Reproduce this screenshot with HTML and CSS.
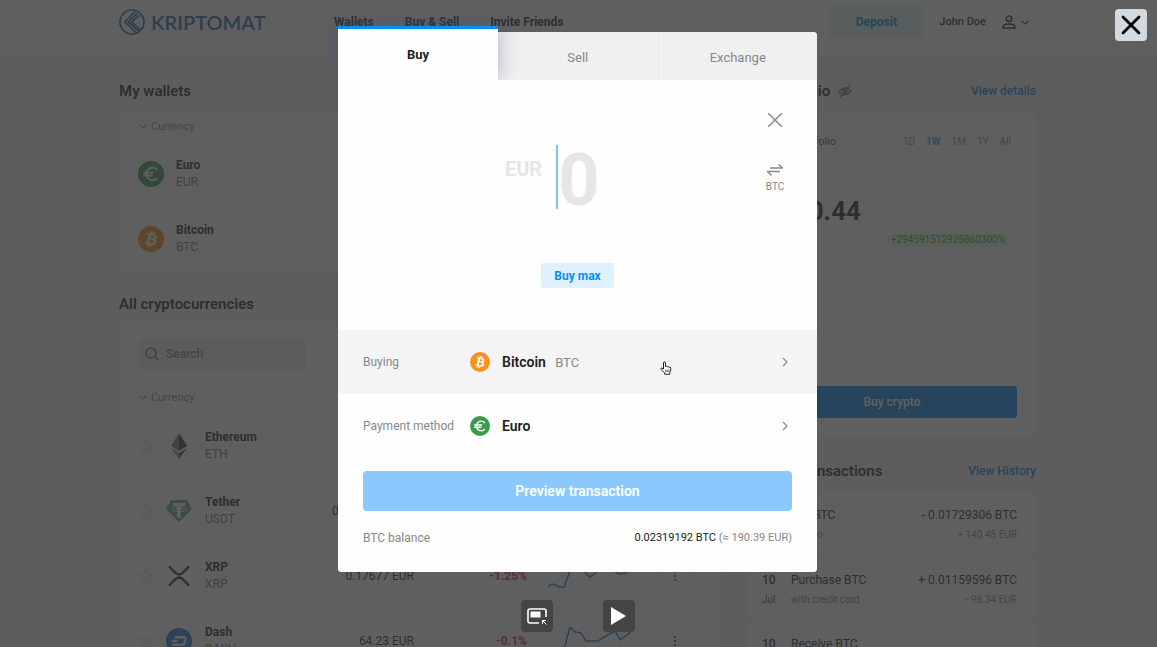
FILE: index.html
```html
<!DOCTYPE html>
<html lang="en">
<head>
<meta charset="UTF-8">
<meta name="viewport" content="width=device-width, initial-scale=1">
<title>Kriptomat</title>
<link rel="stylesheet" href="styles.css">
</head>
<body>

<!-- shared icons -->
<svg class="sprite" aria-hidden="true">
  <symbol id="btc" viewBox="0 0 32 32">
    <circle cx="16" cy="16" r="16" fill="#f7931a"/>
    <path fill="#fff" d="M23.2 14c.3-2.1-1.3-3.2-3.5-4l.7-2.9-1.7-.4-.7 2.8-1.4-.3.7-2.8-1.7-.4-.7 2.9-3.5-.9-.5 1.900s1.300.3 1.200.3c.7.2.8.6.8 1l-2 8c-.1.200-.3.500-.8.400l-1.200-.3-.9 2 3.400.8-.7 2.900 1.700.4.700-2.900 1.400.4-.7 2.800 1.700.5.700-2.900c3 .6 5.200.3 6.100-2.400.7-2.100 0-3.400-1.600-4.200 1.100-.3 2-1 2.200-2.500zm-3.900 5.500c-.5 2.100-4.100 1-5.300.7l.9-3.800c1.200.3 5 .9 4.400 3.100zm.5-5.500c-.5 2-3.500 1-4.400.7l.9-3.400c1 .2 4.100.7 3.500 2.700z"/>
  </symbol>
  <symbol id="eur" viewBox="0 0 32 32">
    <circle cx="16" cy="16" r="16" fill="#3a9b48"/>
    <path fill="none" stroke="#fff" stroke-width="2.4" stroke-linecap="round" d="M23 10.5a7.6 7.6 0 1 0 0 11M7.5 14.5h11M7.5 18h10"/>
  </symbol>
  <symbol id="star" viewBox="0 0 24 24">
    <path fill="none" stroke="#ddd" stroke-width="1.5" d="M12 2.5l2.8 6.6 7.2.6-5.5 4.7 1.7 7-6.2-3.7-6.2 3.7 1.7-7L2 9.7l7.2-.6z"/>
  </symbol>
  <symbol id="down" viewBox="0 0 10 10">
    <path fill="none" stroke="currentColor" stroke-width="1.3" d="M1 3.5l4 4 4-4"/>
  </symbol>
  <symbol id="next" viewBox="0 0 10 10">
    <path fill="none" stroke="currentColor" stroke-width="1.2" d="M3 1l4 4-4 4"/>
  </symbol>
</svg>

<header class="topbar">
  <a class="logo" href="#">
    <svg viewBox="0 0 26 26" width="26" height="26" fill="none" stroke="currentColor" stroke-width="1.7">
      <path d="M21.5 4.500A12 12 0 1 0 21.5 21.500"/>
      <path d="M21.8 4.8a12 12 0 0 1 0 16.4"/>
      <path d="M16 2.5L6 13l11.5 11M18.5 4L9.5 13l10.5 9.5M20.5 5.8L13 13l8.5 8"/>
    </svg>
    <span>KRIPTOMAT</span>
  </a>
  <nav class="nav">
    <a href="#">Wallets</a>
    <a href="#">Buy &amp; Sell</a>
    <a href="#">Invite Friends</a>
  </nav>
  <button class="deposit" type="button">Deposit</button>
  <button class="user" type="button">
    <span>John Doe</span>
    <svg class="user-icon" viewBox="0 0 14 14" width="14" height="14" fill="none" stroke="currentColor" stroke-width="1.4">
      <circle cx="7" cy="3.7" r="2.8"/>
      <path d="M1 13v-1c0-2 2.500-3 6-3s6 1 6 3v1z"/>
    </svg>
    <svg width="8" height="8"><use href="#down"/></svg>
  </button>
</header>

<main class="page">
  <section class="left">
    <h2>My wallets</h2>
    <div class="card">
      <table class="coins">
        <thead><tr><th><svg width="8" height="8"><use href="#down"/></svg>Currency</th></tr></thead>
        <tbody>
          <tr><td><div class="coin">
            <svg width="26" height="26"><use href="#eur"/></svg>
            <p><b>Euro</b><span>EUR</span></p>
          </div></td></tr>
          <tr><td><div class="coin">
            <svg width="26" height="26"><use href="#btc"/></svg>
            <p><b>Bitcoin</b><span>BTC</span></p>
          </div></td></tr>
        </tbody>
      </table>
    </div>

    <h2>All cryptocurrencies</h2>
    <div class="card">
      <div class="searchbar">
        <label class="search">
          <svg viewBox="0 0 14 14" width="14" height="14" fill="none" stroke="currentColor" stroke-width="1.5">
            <circle cx="6" cy="6" r="5"/><path d="M9.5 9.5l4 4"/>
          </svg>
          <input type="search" placeholder="Search" aria-label="Search">
        </label>
      </div>
      <table class="coins market">
        <thead><tr><th colspan="5"><svg width="8" height="8"><use href="#down"/></svg>Currency</th></tr></thead>
        <tbody>
          <tr>
            <td><div class="coin">
              <svg width="16" height="16"><use href="#star"/></svg>
              <svg width="26" height="26" viewBox="0 0 26 26">
                <path fill="#343434" d="M13 0l8 13-8 5z"/><path fill="#777" d="M13 0L5 13l8 5z"/>
                <path fill="#555" d="M13 20l8-5-8 11z"/><path fill="#999" d="M13 20l-8-5 8 11z"/>
              </svg>
              <p><b>Ethereum</b><span>ETH</span></p>
            </div></td>
            <td class="price"></td><td class="change"></td><td class="chart"></td><td class="more"></td>
          </tr>
          <tr>
            <td><div class="coin">
              <svg width="16" height="16"><use href="#star"/></svg>
              <svg width="26" height="26" viewBox="0 0 26 26">
                <path fill="#50af95" d="M5 2h16l5 9-13 13L0 11z"/>
                <path fill="#fff" d="M7 5h12v3.5h-4V20h-4V8.5H7z"/>
                <ellipse cx="13" cy="11.8" rx="8" ry="1.8" fill="none" stroke="#fff" stroke-width=".8"/>
              </svg>
              <p><b>Tether</b><span>USDT</span></p>
            </div></td>
            <td class="price">0.8801921 EUR</td><td class="change"></td><td class="chart"></td><td class="more"></td>
          </tr>
          <tr>
            <td><div class="coin">
              <svg width="16" height="16"><use href="#star"/></svg>
              <svg width="26" height="26" viewBox="0 0 26 26" fill="none" stroke="#222" stroke-width="2.2">
                <path d="M3 3.5l6.5 6.5q3.5 3 7 0L23 3.5M3 22.5L9.5 16q3.5-3 7 0l6.5 6.5"/>
              </svg>
              <p><b>XRP</b><span>XRP</span></p>
            </div></td>
            <td class="price">0.17677 EUR</td>
            <td class="change">-1.25%</td>
            <td class="chart"><svg viewBox="0 0 84 28" width="84" height="28"><path d="M1 24l5-2 6 3h5l6-16 6-5 6 4 8 7 8-6 8-5 8 5 5 3 8-1"/></svg></td>
            <td class="more"><button type="button" aria-label="More"><i></i><i></i><i></i></button></td>
          </tr>
          <tr>
            <td><div class="coin">
              <svg width="16" height="16"><use href="#star"/></svg>
              <svg width="26" height="26" viewBox="0 0 26 26">
                <circle cx="13" cy="13" r="13" fill="#1c75d8"/>
                <path fill="none" stroke="#fff" stroke-width="2.4" d="M8.5 9.2H18q2 0 1.5 2l-.8 3.2q-.7 2.4-3 2.4H6M5.5 13h6"/>
              </svg>
              <p><b>Dash</b><span>DASH</span></p>
            </div></td>
            <td class="price">64.23 EUR</td>
            <td class="change">-0.1%</td>
            <td class="chart"><svg viewBox="0 0 84 28" width="84" height="28"><path d="M5 24l6-2h6l6-22 5 5 6 1 5 8h12l8-5 9-5 5 9 11-8"/></svg></td>
            <td class="more"><button type="button" aria-label="More"><i></i><i></i><i></i></button></td>
          </tr>
        </tbody>
      </table>
    </div>
  </section>

  <aside class="right">
    <div class="heading">
      <h2>My portfolio</h2>
      <svg viewBox="0 0 14 14" width="14" height="14" fill="none" stroke="#777" stroke-width="1.4">
        <path d="M1 8q6-8 12-1-6 7-12 1zM2 13L12 1"/><circle cx="7" cy="7" r="2" fill="#777"/>
      </svg>
      <a href="#">View details</a>
    </div>
    <div class="card portfolio">
      <div class="range">
        <span>Total portfolio</span>
        <button type="button">1D</button>
        <button type="button" class="on">1W</button>
        <button type="button">1M</button>
        <button type="button">1Y</button>
        <button type="button">All</button>
      </div>
      <p class="total">€ 190.44</p>
      <p class="gain"><span>+294591512925860300%</span></p>
      <button class="buy-crypto" type="button">Buy crypto</button>
    </div>

    <div class="heading">
      <h2>Recent transactions</h2>
      <a href="#">View History</a>
    </div>
    <ul class="card history">
      <li>
        <p class="date"><b>10</b><span>Jul</span></p>
        <p class="what"><b>Sell BTC</b><span>to Euro</span></p>
        <p class="amount"><b>- 0.01729306 BTC</b><span>+ 140.48 EUR</span></p>
      </li>
      <li>
        <p class="date"><b>10</b><span>Jul</span></p>
        <p class="what"><b>Purchase BTC</b><span>with credit card</span></p>
        <p class="amount"><b>+ 0.01159596 BTC</b><span>- 96.34 EUR</span></p>
      </li>
      <li>
        <p class="date"><b>10</b><span>Jul</span></p>
        <p class="what"><b>Receive BTC</b><span>from wallet</span></p>
        <p class="amount"><b>+ 0.00279577 BTC</b></p>
      </li>
    </ul>
  </aside>
</main>

<div class="overlay">
  <div class="modal" role="dialog" aria-label="Buy">
    <div class="tabs" role="tablist">
      <button type="button" role="tab" class="active" aria-selected="true">Buy</button>
      <button type="button" role="tab">Sell</button>
      <button type="button" role="tab">Exchange</button>
    </div>
    <form class="modal-body">
      <div class="amount-area">
        <button class="close" type="button" aria-label="Close">
          <svg viewBox="0 0 14 14" width="14" height="14" fill="none" stroke="currentColor" stroke-width="1.5"><path d="M0 0l14 14M14 0L0 14"/></svg>
        </button>
        <div class="amount-field">
          <label for="amount">EUR</label>
          <input id="amount" type="text" placeholder="0">
        </div>
        <button class="swap" type="button">
          <svg viewBox="0 0 16 12" width="16" height="12" fill="none" stroke="currentColor" stroke-width="1.4"><path d="M3 4h12.500L11.500.5M13 7.500H.5l4 4"/></svg>
          <span>BTC</span>
        </button>
        <button class="buy-max" type="button">Buy max</button>
      </div>
      <button class="pick hover" type="button">
        <span>Buying</span>
        <svg width="20" height="20"><use href="#btc"/></svg>
        <span class="picked"><b>Bitcoin</b> BTC</span>
        <svg width="10" height="10"><use href="#next"/></svg>
      </button>
      <button class="pick" type="button">
        <span>Payment method</span>
        <svg width="20" height="20"><use href="#eur"/></svg>
        <span class="picked"><b>Euro</b></span>
        <svg width="10" height="10"><use href="#next"/></svg>
      </button>
      <button class="preview" type="submit">Preview transaction</button>
      <div class="balance">
        <span>BTC balance</span>
        <span class="value"><b>0.02319192 BTC</b> (≈ 190.39 EUR)</span>
      </div>
    </form>
    <svg class="pointer" viewBox="0 0 12 14" width="12" height="14">
      <path fill="#fff" stroke="#222" d="M3.500 8V2q0-1.200 1-1.200t1 1.200v3.500q1.200-.8 1.700.3 1.200-.6 1.700.4 1.800-.4 1.900 1.200 0 2.600-1 4v1.800H4.700V12L1 8.300q-.4-1.500.8-1.300z"/>
      <path stroke="#222" stroke-width=".7" d="M5.700 8.500v2.500M7.300 8.500v2.500M8.900 8.500v2.500"/>
    </svg>
  </div>
</div>

<button class="viewer-close" type="button" aria-label="Close viewer">
  <svg viewBox="0 0 20 20" width="20" height="20" fill="none" stroke="#000" stroke-width="2.8" stroke-linecap="round"><path d="M2 2l16 16M18 2L2 18"/></svg>
</button>
<div class="player">
  <button type="button" aria-label="Picture in picture">
    <svg viewBox="0 0 20 18" width="20" height="18" fill="none" stroke="#fff">
      <path stroke-width="1.6" d="M12 16H3q-2 0-2-2V4q0-2 2-2h14q2 0 2 2v6"/>
      <path fill="#fff" stroke="none" d="M3.500 4.500h10v6h-10z"/>
      <path d="M19.500 17.500l-4-4M15.500 17v-3.500H19"/>
    </svg>
  </button>
  <button type="button" aria-label="Play">
    <svg viewBox="0 0 16 18" width="16" height="18"><path fill="#fff" d="M0 0l15 9-15 9z"/></svg>
  </button>
</div>

</body>
</html>
```

FILE: styles.css
```css
* {
  box-sizing: border-box;
}

body {
  margin: 0;
  height: 100vh;
  overflow: hidden;
  background: #f6f6f6;
  color: #222;
  font-family: Roboto, "Liberation Sans", sans-serif;
  font-size: 12px;
  line-height: 16px;
}

button, input {
  font: inherit;
  color: inherit;
  border: 0;
  padding: 0;
  background: none;
}

a {
  color: inherit;
  text-decoration: none;
}

h2, p, ul {
  margin: 0;
  padding: 0;
}

svg {
  flex: none;
}

.sprite {
  position: absolute;
  width: 0;
  height: 0;
}

/* header */
.topbar {
  display: flex;
  align-items: center;
  height: 58px;
  padding: 0 121px 14px 119px;
  background: #fff;
  border-bottom: 1px solid #f2f2f2;
  font-weight: 500;
}

.logo {
  display: flex;
  align-items: center;
  gap: 6px;
  width: 215px;
  color: #1468b0;
  font-family: Lato, sans-serif;
  font-size: 20px;
  font-weight: 600;
}

.nav {
  display: flex;
  gap: 31px;
  font-weight: 700;
}

.deposit {
  width: 94px;
  height: 32px;
  margin-left: auto;
  border-radius: 4px;
  background: #def4fb;
  color: #0086f5;
  font-weight: 700;
}

.user {
  display: flex;
  align-items: center;
  gap: 5px;
  margin: 0 7px 0 16px;
  font-size: 11px;
  font-weight: 500;
}

.user-icon {
  margin-left: 11px;
}

/* page */
.page {
  display: grid;
  grid-template-columns: minmax(0, 603fr) minmax(0, 288fr);
  gap: 26px;
  padding: 22px 121px 0 119px;
}

h2 {
  font-size: 15px;
  line-height: 22px;
  font-weight: 600;
}

.left h2, .heading {
  margin-bottom: 11px;
}

.card {
  margin-bottom: 22px;
  border-radius: 4px;
  background: #fff;
  box-shadow: 0 1px 4px #eee;
}

.coins {
  width: 100%;
  border-collapse: collapse;
}

.coins th {
  height: 28px;
  padding: 0 20px;
  border-bottom: 1px solid #f2f2f2;
  color: #888;
  font-size: 11px;
  font-weight: 400;
  text-align: left;
}

.coins th svg {
  margin-right: 4px;
}

.coins td {
  height: 65px;
  padding: 0;
}

.coins tr + tr td {
  border-top: 1px solid #f2f2f2;
}

.coin {
  display: flex;
  align-items: center;
  gap: 12px;
  padding-left: 19px;
}

.coin b, .coin span {
  display: block;
  line-height: 17px;
}

b {
  font-weight: 500;
}

.coin b {
  font-weight: 700;
}

.coin span {
  color: #777;
}

.searchbar {
  padding: 12px 19px;
  border-bottom: 1px solid #f2f2f2;
}

.search {
  display: flex;
  align-items: center;
  gap: 7px;
  width: 168px;
  height: 32px;
  padding: 0 7px;
  border-radius: 4px;
  background: #f0f0f0;
  color: #777;
}

.search input {
  width: 100%;
  outline: 0;
  font-weight: 500;
}

.search input::placeholder {
  color: #888;
}

.market th {
  height: 30px;
}

.market .price {
  width: 120px;
  text-align: right;
}

.market .change {
  width: 113px;
  color: #e02030;
  font-weight: 700;
  text-align: right;
}

.market .chart {
  width: 105px;
  padding-left: 20px;
}

.market .coin {
  gap: 13px;
}

.market .coin svg:first-child {
  margin-right: -1px;
}

.chart svg {
  display: block;
  fill: none;
  stroke: #0086f5;
  stroke-width: 1.5;
}

.market .more {
  width: 90px;
}

.more button {
  display: flex;
  flex-direction: column;
  align-items: center;
  justify-content: center;
  gap: 2px;
  width: 26px;
  height: 26px;
  margin-left: 30px;
  border-radius: 50%;
  box-shadow: 0 0 3px #eee;
}

.more i {
  width: 2px;
  height: 2px;
  background: #0086f5;
}

/* portfolio */
.heading {
  display: flex;
  align-items: center;
  gap: 8px;
}

.heading a {
  margin-left: auto;
  color: #0086f5;
  font-weight: 500;
}

.portfolio {
  padding: 21px 19px 20px;
}

.range {
  display: flex;
  gap: 11px;
  padding-right: 6px;
  color: #888;
  font-size: 10px;
}

.range span {
  margin-right: auto;
  color: #555;
  font-size: 11px;
}

.range .on {
  color: #0086f5;
  font-weight: 500;
}

.total {
  display: flex;
  justify-content: flex-end;
  width: 94px;
  margin-top: 45px;
  font-size: 26px;
  line-height: 32px;
  font-weight: 700;
  white-space: nowrap;
}

.gain {
  margin-top: 6px;
  padding-right: 8px;
  color: #22b822;
  font-size: 10px;
  line-height: 14px;
  text-align: right;
}

.gain span {
  display: inline-block;
  padding: 0 4px;
  border-radius: 7px;
  background: #e8f8e8;
}

.buy-crypto {
  display: block;
  width: 100%;
  height: 32px;
  margin-top: 139px;
  border-radius: 3px;
  background: #0086f5;
  color: #fff;
  font-weight: 500;
}

.history {
  list-style: none;
}

.history li {
  display: flex;
  align-items: center;
  height: 64px;
  padding: 0 19px 0 12px;
}

.history li + li {
  border-top: 1px solid #f2f2f2;
}

.history b, .history span {
  display: block;
  font-weight: 400;
  line-height: 19px;
}

.history span {
  color: #888;
  font-size: 10px;
}

.history .date {
  width: 31px;
  padding-left: 2px;
}

.history .date b {
  font-weight: 500;
}

.history .date span {
  color: #444;
}

.amount {
  margin-left: auto;
  text-align: right;
}

/* buy dialog */
.overlay {
  position: fixed;
  inset: 0;
  display: flex;
  align-items: flex-start;
  justify-content: center;
  padding: 32px 2px 0 0;
  background: rgba(50, 50, 50, 0.78);
}

.modal {
  position: relative;
  width: 479px;
  border-radius: 4px;
  background: #fefefe;
  color: #888;
}

.tabs {
  display: grid;
  grid-template-columns: 160px 1fr 1fr;
  height: 48px;
  border-radius: 4px 4px 0 0;
  background: #f0f0f0;
}

.tabs button {
  height: 48px;
  padding-top: 4px;
  font-size: 13px;
}

.tabs button + button + button {
  border-left: 1px solid #eaeaea;
}

.tabs .active {
  height: 54px;
  margin-top: -6px;
  padding-top: 0;
  border-top: 3px solid #0090f8;
  background: #fefefe;
  box-shadow: 0 0 20px rgba(70, 80, 130, 0.4);
  color: #222;
  font-weight: 700;
}

.modal-body {
  position: relative;
  padding-bottom: 24px;
  border-radius: 0 0 4px 4px;
  background: #fefefe;
}

.amount-area {
  display: grid;
  grid-template-columns: 1fr auto 1fr;
  align-items: center;
  padding: 32px 26px 42px;
}

.close {
  grid-column: 3;
  justify-self: end;
  width: 32px;
  height: 16px;
}

.close svg, .swap svg {
  display: block;
  margin: 0 auto;
}

.amount-field {
  grid-column: 2;
  grid-row: 2;
  display: flex;
  gap: 14px;
  height: 64px;
  margin: 17px 0 54px;
  color: #e6e6e6;
  font-weight: 700;
}

.amount-field label {
  padding-top: 12px;
  font-size: 20px;
  line-height: 24px;
}

.amount-field input {
  width: 94px;
  height: 64px;
  padding-top: 6px;
  border-left: 2px solid #7cc4fb;
  outline: 0;
  font-size: 72px;
  line-height: 58px;
}

.amount-field input::placeholder {
  color: #e6e6e6;
}

.swap {
  grid-column: 3;
  grid-row: 2;
  justify-self: end;
  width: 32px;
  margin: 21px 0 54px;
  font-size: 10px;
}

.swap span {
  display: block;
  margin-top: 3px;
}

.buy-max {
  grid-column: 2;
  justify-self: center;
  width: 73px;
  height: 25px;
  border-radius: 2px;
  background: #dff1ff;
  color: #0090f8;
  font-weight: 700;
}

.pick {
  display: grid;
  grid-template-columns: 95px 20px 1fr 10px;
  align-items: center;
  gap: 12px;
  width: 100%;
  height: 64px;
  padding: 0 27px 0 25px;
  text-align: left;
}

.pick.hover {
  background: #f4f4f4;
}

.picked {
  font-size: 13px;
}

.picked b {
  margin-right: 6px;
  color: #222;
  font-size: 14px;
  font-weight: 600;
}

.preview {
  display: block;
  width: calc(100% - 50px);
  height: 40px;
  margin: 13px 25px 17px;
  border-radius: 4px;
  background: #8bc8fe;
  color: #fff;
  font-size: 14px;
  font-weight: 600;
}

.balance {
  display: flex;
  justify-content: space-between;
  height: 20px;
  padding: 0 25px;
  line-height: 20px;
}

.balance .value {
  font-size: 11px;
}

.balance b {
  color: #222;
  font-weight: 400;
}

.pointer {
  position: absolute;
  top: 329px;
  left: 322px;
}

/* viewer controls */
.viewer-close {
  position: fixed;
  top: 9px;
  right: 10px;
  display: grid;
  place-items: center;
  width: 32px;
  height: 32px;
  border-radius: 4px;
  background: #d3dae0;
}

.player {
  position: fixed;
  right: 1px;
  bottom: 15px;
  left: 0;
  display: flex;
  justify-content: center;
  gap: 50px;
}

.player button {
  display: grid;
  place-items: center;
  width: 32px;
  height: 32px;
  border-radius: 4px;
  background: #444;
}
```
